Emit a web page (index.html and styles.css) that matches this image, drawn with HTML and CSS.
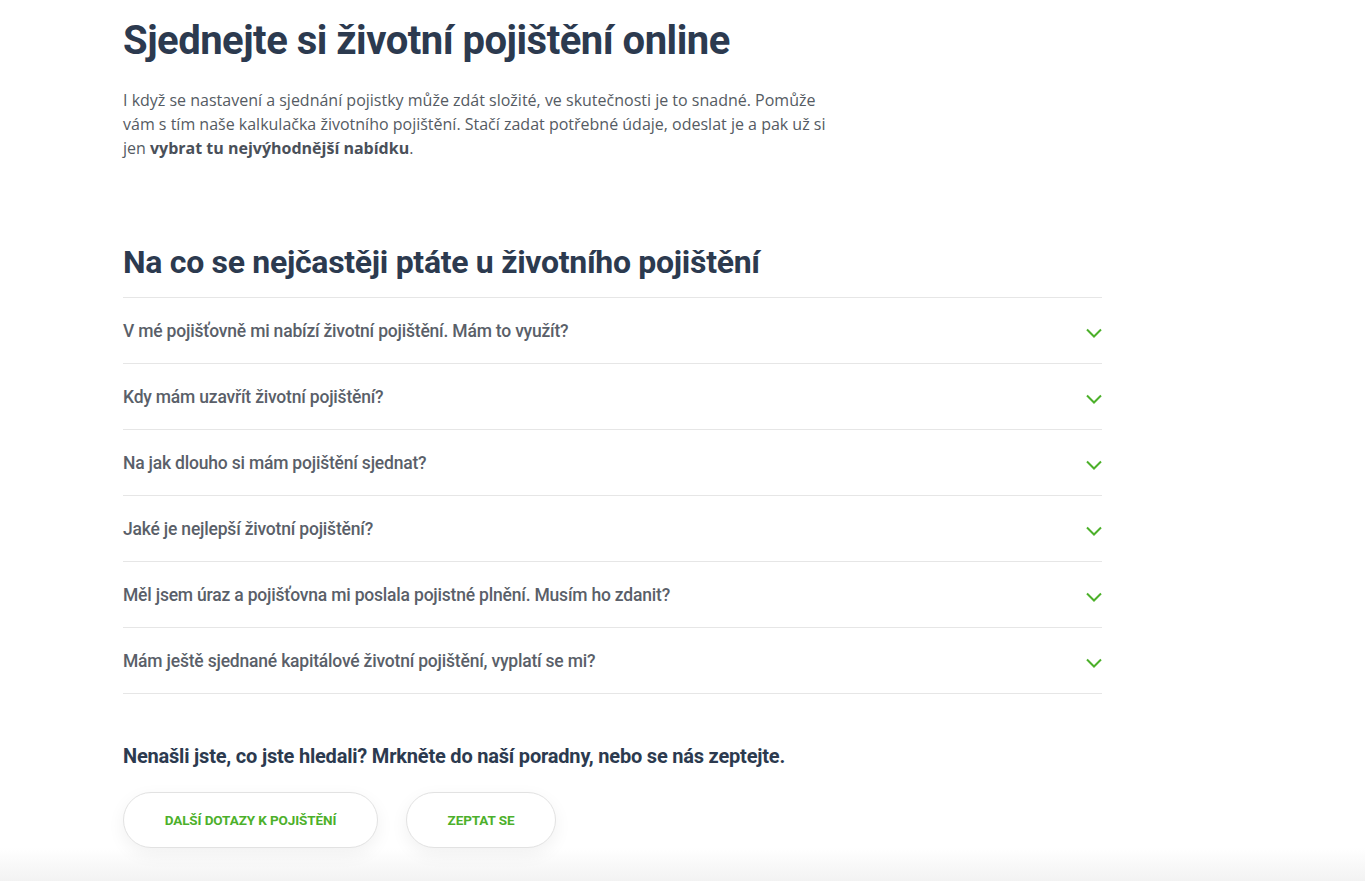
FILE: index.html
```html
<!DOCTYPE html>
<html lang="cs">
<head>
  <meta charset="UTF-8">
  <meta name="viewport" content="width=device-width, initial-scale=1.0">
  <title>Životní pojištění online</title>
  <link rel="stylesheet" href="styles.css">
</head>
<body>
  <main class="page">
    <section class="intro">
      <h1 class="intro-title">Sjednejte si životní pojištění online</h1>
      <p class="intro-text">I když se nastavení a sjednání pojistky může zdát složité, ve skutečnosti je to snadné. Pomůže vám s tím naše kalkulačka životního pojištění. Stačí zadat potřebné údaje, odeslat je a pak už si jen <strong>vybrat tu nejvýhodnější nabídku</strong>.</p>
    </section>

    <section class="faq">
      <h2 class="faq-title">Na co se nejčastěji ptáte u životního pojištění</h2>
      <ul class="faq-list">
        <li class="faq-item">
          <span>V mé pojišťovně mi nabízí životní pojištění. Mám to využít?</span>
          <svg class="chevron" width="16" height="10" viewBox="0 0 16 10"><path d="M1 1.5l7 7 7-7" /></svg>
        </li>
        <li class="faq-item">
          <span>Kdy mám uzavřít životní pojištění?</span>
          <svg class="chevron" width="16" height="10" viewBox="0 0 16 10"><path d="M1 1.5l7 7 7-7" /></svg>
        </li>
        <li class="faq-item">
          <span>Na jak dlouho si mám pojištění sjednat?</span>
          <svg class="chevron" width="16" height="10" viewBox="0 0 16 10"><path d="M1 1.5l7 7 7-7" /></svg>
        </li>
        <li class="faq-item">
          <span>Jaké je nejlepší životní pojištění?</span>
          <svg class="chevron" width="16" height="10" viewBox="0 0 16 10"><path d="M1 1.5l7 7 7-7" /></svg>
        </li>
        <li class="faq-item">
          <span>Měl jsem úraz a pojišťovna mi poslala pojistné plnění. Musím ho zdanit?</span>
          <svg class="chevron" width="16" height="10" viewBox="0 0 16 10"><path d="M1 1.5l7 7 7-7" /></svg>
        </li>
        <li class="faq-item">
          <span>Mám ještě sjednané kapitálové životní pojištění, vyplatí se mi?</span>
          <svg class="chevron" width="16" height="10" viewBox="0 0 16 10"><path d="M1 1.5l7 7 7-7" /></svg>
        </li>
      </ul>

      <p class="faq-more">Nenašli jste, co jste hledali? Mrkněte do naší poradny, nebo se nás zeptejte.</p>
      <div class="faq-actions">
        <a class="pill-button pill-wide" href="#">Další dotazy k pojištění</a>
        <a class="pill-button pill-narrow" href="#">Zeptat se</a>
      </div>
    </section>
  </main>
  <div class="page-bottom"></div>
</body>
</html>
```

FILE: styles.css
```css
body {
  margin: 0;
  background-color: #ffffff;
  font-family: Roboto, Arial, sans-serif;
  color: #2c3a4f;
}

.page {
  width: 979px;
  margin-left: 123px;
}

.intro-title {
  margin: 17px 0 0;
  font-size: 40px;
  line-height: 48px;
  font-weight: 700;
  letter-spacing: -0.5px;
  color: #2c3a4f;
}

.intro-text {
  width: 720px;
  margin: 23px 0 0;
  font-family: "Open Sans", Arial, sans-serif;
  font-size: 16px;
  line-height: 24px;
  color: #555b63;
}

.intro-text strong {
  font-weight: 700;
  color: #4a5059;
}

.faq {
  margin-top: 82px;
}

.faq-title {
  margin: 0 0 15px;
  font-size: 32px;
  line-height: 40px;
  font-weight: 700;
  letter-spacing: -0.3px;
  color: #2c3a4f;
}

.faq-list {
  list-style: none;
  margin: 0;
  padding: 0;
  border-top: 1px solid #e6e6e6;
}

.faq-item {
  display: flex;
  align-items: center;
  justify-content: space-between;
  height: 65px;
  border-bottom: 1px solid #e6e6e6;
  font-size: 17.5px;
  font-weight: 500;
  color: #5a5f69;
  cursor: pointer;
}

.faq-item span {
  letter-spacing: -0.2px;
}

.chevron {
  margin-top: 4px;
}

.chevron path {
  fill: none;
  stroke: #4cb02a;
  stroke-width: 2;
}

.faq-more {
  margin: 49px 0 0;
  font-size: 20px;
  line-height: 26px;
  font-weight: 700;
  letter-spacing: -0.2px;
  color: #2c3a4f;
}

.faq-actions {
  display: flex;
  gap: 28px;
  margin-top: 23px;
}

.pill-button {
  display: flex;
  align-items: center;
  justify-content: center;
  height: 54px;
  border: 1px solid #e2e2e2;
  border-radius: 28px;
  background-color: #ffffff;
  box-shadow: 0 6px 18px rgba(0, 0, 0, 0.06);
  color: #4cb02a;
  font-size: 13.5px;
  font-weight: 700;
  text-transform: uppercase;
  text-decoration: none;
  letter-spacing: -0.1px;
}

.pill-wide {
  width: 253px;
}

.pill-narrow {
  width: 148px;
}

.page-bottom {
  height: 40px;
  background: linear-gradient(to bottom, #ffffff, #f0f0f0);
}
```
